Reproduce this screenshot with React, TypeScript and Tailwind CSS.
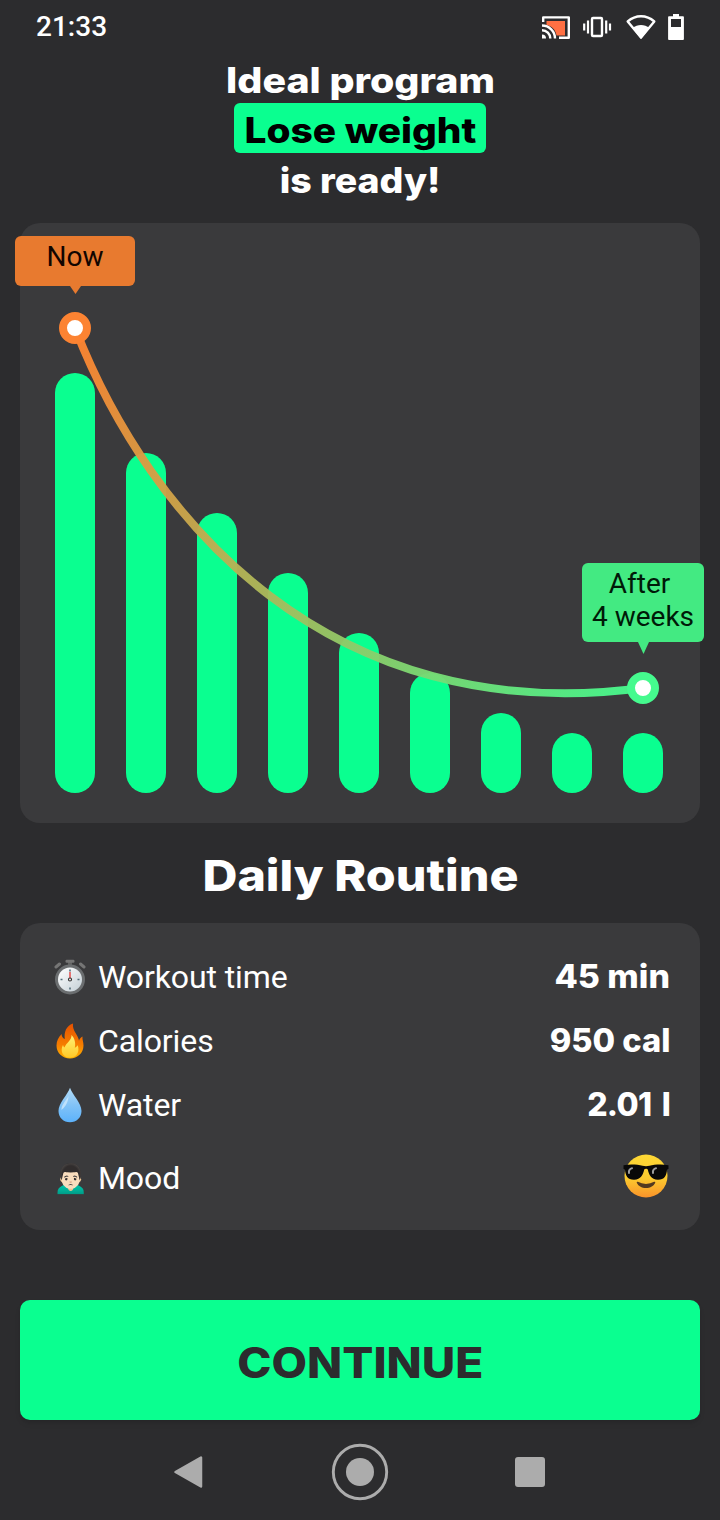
import { type FC, type ReactNode } from 'react';

interface RoutineItem {
    icon: ReactNode;
    label: string;
    value: ReactNode;
    rowClass: string;
    valueClass: string;
}

const BAR_HEIGHTS = [420, 340, 280, 220, 160, 120, 80, 60, 60];

const StopwatchIcon: FC = () => (
    <svg className="ml-0.5" width="32" height="36" viewBox="0 0 32 36">
        <defs>
            <linearGradient id="watch-face" x1="0" y1="0" x2="1" y2="1">
                <stop offset="0" stopColor="#ffffff" />
                <stop offset="1" stopColor="#c4cfd6" />
            </linearGradient>
        </defs>
        <path d="M14 3h4v5h-4z" fill="#616161" />
        <rect x="11.500" y=".8" width="9" height="3" rx="1.200" fill="#757575" />
        <path d="M2 8l3.500-3M30 8l-3.500-3" stroke="#757575" strokeWidth="3" strokeLinecap="round" />
        <circle cx="16" cy="20.500" r="15" fill="#6b6e70" />
        <circle cx="16" cy="20.500" r="12" fill="url(#watch-face)" />
        <path d="M16 10.500v2M16 28.500v2M6.500 20.500h2M23.500 20.500h2" stroke="#546e7a" strokeWidth="1.600" />
        <path d="M16 13v6" stroke="#e57373" strokeWidth="2" />
        <circle cx="16" cy="20.500" r="1.500" fill="#fff" stroke="#333" strokeWidth="1.200" />
    </svg>
);

const FlameIcon: FC = () => (
    <svg className="ml-1" width="28" height="36" viewBox="0 0 28 36">
        <defs>
            <linearGradient id="flame-outer" x1="0" y1="0" x2="0" y2="1">
                <stop offset="0" stopColor="#e65100" />
                <stop offset=".6" stopColor="#f57c00" />
                <stop offset="1" stopColor="#ffb300" />
            </linearGradient>
            <linearGradient id="flame-inner" x1="0" y1="0" x2="0" y2="1">
                <stop offset="0" stopColor="#fff176" />
                <stop offset="1" stopColor="#ffca28" />
            </linearGradient>
        </defs>
        <path d="M17 .5C10 3 8 9 8.800 16c-2-.8-3.300-2.800-3.200-5C2.500 14 .5 18 .5 22.500.5 30 6.500 35.500 14 35.500S27.500 30 27.500 22.500c0-3.500-1.400-6-1-9-1.600.8-3 2.200-3.500 4.300C22.500 12 16 8 17 .5z" fill="url(#flame-outer)" />
        <path d="M15.500 12c.5 5-5.500 8-7 12.500-.8-.6-1.300-1.600-1.500-2.600-3.500 6 .2 12.800 7 12.800 7.300 0 10-7 7.600-12.400-.7 1.300-1.500 2-2.800 2.600C20 20 18.500 15 15.500 12z" fill="url(#flame-inner)" />
    </svg>
);

const DropIcon: FC = () => (
    <svg className="ml-1.5" width="24" height="36" viewBox="0 0 24 36">
        <defs>
            <linearGradient id="drop" x1="0" y1="0" x2="0" y2="1">
                <stop offset="0" stopColor="#b3dcf8" />
                <stop offset=".5" stopColor="#82c3f7" />
                <stop offset="1" stopColor="#5cb2fb" />
            </linearGradient>
        </defs>
        <path d="M12 .8C9.500 8 .5 16 .5 24c0 6.500 5 11.300 11.500 11.300S23.500 30.500 23.500 24C23.500 16 14.500 8 12 .8z" fill="url(#drop)" />
        <path d="M10.500 9C8 14 3 18 3.500 23c2.500-2 7-7 7-14z" fill="#d5edfc" opacity=".7" />
    </svg>
);

const CoolFaceIcon: FC = () => (
    <svg className="mb-1" width="48" height="44" viewBox="0 0 48 44">
        <defs>
            <linearGradient id="cool-face" x1="0" y1="0" x2="0" y2="1">
                <stop offset="0" stopColor="#fdd835" />
                <stop offset=".55" stopColor="#fccb2f" />
                <stop offset="1" stopColor="#f9922a" />
            </linearGradient>
        </defs>
        <circle cx="24" cy="22" r="21.500" fill="url(#cool-face)" />
        <path d="M1.500 11.200c6-1.200 14-.9 19 .6 2 .6 5 .6 7 0 5-1.500 13-1.800 19-.6v3.600l-1.500 1c-.5 6-2.500 10-9 10-7 0-9-5-10.200-10.200-.6-1.300-3-1.300-3.600 0C21 20.800 19 25.800 12 25.800c-6.500 0-8.500-4-9-10l-1.500-1z" fill="#080808" />
        <path d="M7 19c-.5-2.500 1-4.500 3-4.800M31 19c-.5-2.500 1-4.500 3-4.800" stroke="#9e9e9e" strokeWidth="2" fill="none" strokeLinecap="round" />
        <path d="M15 28.500c5.500 3.300 12.500 3.300 18 0-1.500 7.300-16.500 7.300-18 0z" fill="#543a20" />
        <path d="M15.500 28.500c5 3 12 3 17 0" stroke="#543a20" strokeWidth="1.600" fill="none" strokeLinecap="round" />
    </svg>
);

const ROUTINE: RoutineItem[] = [
    { icon: <StopwatchIcon />, label: 'Workout time', value: '45 min', rowClass: 'h-16', valueClass: 'scale-x-[1.06]' },
    { icon: <FlameIcon />, label: 'Calories', value: '950 cal', rowClass: 'h-16', valueClass: 'scale-x-[1.02]' },
    { icon: <DropIcon />, label: 'Water', value: '2.01 l', rowClass: 'h-16', valueClass: 'tracking-[-0.7px] [word-spacing:4px]' },
    { icon: '🙍🏻‍♂️', label: 'Mood', value: <CoolFaceIcon />, rowClass: 'h-[82px]', valueClass: '' },
];

const StatusBar: FC = () => (
    <div className="flex h-[53px] items-center justify-between pr-[35px] pl-9">
        <span className="text-[28px] leading-none font-medium">21:33</span>
        <svg width="144" height="28" viewBox="541 12 144 28" fill="none">
            {/* Cast */}
            <path d="M546.500 20H565v14.500h-8.500c-1-6-4.500-9.500-10-10.500z" fill="#ff7043" />
            <path d="M543.200 21v-4.600H568.800v20.400H559" stroke="#fff" strokeWidth="2.400" strokeLinejoin="round" />
            <path d="M542 24.500a13 13 0 0 1 13 13M542 29.200a8.300 8.300 0 0 1 8.300 8.300" stroke="#fff" strokeWidth="2.400" />
            <path d="M542 33.500a4 4 0 0 1 4 4h-4z" fill="#fff" />
            {/* Vibrate */}
            <rect x="592" y="17" width="10" height="18" rx="1" stroke="#fff" strokeWidth="2.400" />
            <path d="M588 19.500v13M584.200 22.500v7M606.200 19.500v13M610 22.500v7" stroke="#fff" strokeWidth="2.200" />
            {/* Wifi */}
            <path d="M627.700 20.500c8-7 18.600-7 26.600 0L641 36.500z" stroke="#fff" strokeWidth="2.400" strokeLinejoin="round" />
            <path d="M632.500 27c5-4 12-4 17 0L641 38z" fill="#fff" />
            {/* Battery */}
            <path d="M673 13h6v2.200h4q.9 0 .9.900v22q0 .9-.9.900h-14q-.9 0-.9-.9v-22q0-.9.900-.9h4zM671 18v8h10v-8z" fill="#fff" fillRule="evenodd" />
        </svg>
    </div>
);

const Title: FC = () => (
    <h1 className="flex flex-col items-center font-['Inter',sans-serif] text-[35px] leading-[50px] font-extrabold">
        <span className="flex h-[50px] scale-x-[1.125] items-center pt-1">Ideal program</span>
        <span className="flex h-[50px] w-[252px] items-center justify-center rounded-[6px] bg-[#0aff90] text-black">
            <span className="scale-x-[1.11] pt-1">Lose weight</span>
        </span>
        <span className="flex h-[50px] scale-x-[1.07] items-center pt-1">is ready!</span>
    </h1>
);

const WeightChart: FC = () => (
    <section className="relative mx-5 mt-5 h-[600px] rounded-[20px] bg-[#3a3a3c]">
        <div className="flex h-full items-end gap-[31px] pb-[30px] pl-[35px]">
            {BAR_HEIGHTS.map((height, i) => (
                <div key={i} className="w-10 rounded-full bg-[#0aff90]" style={{ height }} />
            ))}
        </div>

        {/* Trend line */}
        <svg className="absolute inset-0" width="680" height="600" viewBox="20 223 680 600" fill="none">
            <defs>
                <linearGradient id="trend" gradientUnits="userSpaceOnUse" x1="75" y1="328" x2="643" y2="688">
                    <stop offset="0" stopColor="#ff8330" />
                    <stop offset="1" stopColor="#45fa8e" />
                </linearGradient>
            </defs>
            <path d="M75 328C150 521 330 729 643 688" stroke="url(#trend)" strokeWidth="8" opacity=".96" />
            <circle cx="75" cy="328" r="12" fill="#fff" stroke="#fc8332" strokeWidth="8" />
            <circle cx="643" cy="688" r="12" fill="#fff" stroke="#45fa8e" strokeWidth="8" />
        </svg>

        <div className="absolute top-[13px] -left-[5px] h-[50px] w-[120px] rounded-[6px] bg-[#e87a2f] pt-1 text-center text-[28px] leading-[33px] text-[#120500]">
            Now
            <svg className="absolute top-[50px] left-[55px]" width="11" height="8" viewBox="0 0 11 8">
                <path d="M0 0h11L5.500 8z" fill="#e87a2f" />
            </svg>
        </div>
        <div className="absolute top-[340px] left-[562px] h-[79px] w-[122px] rounded-[6px] bg-[#43ea82] pt-1 text-center text-[28px] leading-[33px] text-[#001a08]">
            After&nbsp;
            <br />4 weeks
            <svg className="absolute top-[79px] left-14" width="11" height="12" viewBox="0 0 11 12">
                <path d="M0 0h11L5.500 12z" fill="#43ea82" />
            </svg>
        </div>
    </section>
);

const RoutineRow: FC<{ item: RoutineItem }> = ({ item }) => (
    <div className={`flex items-center ${item.rowClass}`}>
        <span className="w-[46px] text-[30px] leading-none whitespace-nowrap">{item.icon}</span>
        <span className="text-[32px] leading-none tracking-[-0.1px]">{item.label}</span>
        <span className={`ml-auto origin-right font-['Inter',sans-serif] text-[32px] leading-none font-extrabold ${item.valueClass}`}>
            {item.value}
        </span>
    </div>
);

const NavBar: FC = () => (
    <div className="flex h-[100px] items-center justify-center pt-1">
        <svg width="374" height="60" viewBox="173 1442 374 60" fill="#acacac">
            <path d="M175.500 1472 201 1457.500v29z" stroke="#acacac" strokeWidth="2.500" strokeLinejoin="round" />
            <circle cx="360" cy="1472" r="14" />
            <circle cx="360" cy="1472" r="26.700" fill="none" stroke="#acacac" strokeWidth="2.900" />
            <rect x="515" y="1457" width="30" height="30" rx="3" />
        </svg>
    </div>
);

export default function App() {
    return (
        <main className="flex h-[1520px] w-[720px] flex-col overflow-hidden bg-[#2c2c2e] font-['Roboto','Noto_Color_Emoji',sans-serif] text-white">
            <StatusBar />
            <Title />
            <WeightChart />

            <h2 className="flex h-[100px] items-center justify-center pt-1 font-['Inter',sans-serif] text-[43px] leading-none font-extrabold">
                <span className="scale-x-[1.125]">Daily Routine</span>
            </h2>

            <section className="mx-5 h-[307px] rounded-[20px] bg-[#3a3a3c] pt-[22px] pr-[30px] pl-8">
                {ROUTINE.map((item) => (
                    <RoutineRow key={item.label} item={item} />
                ))}
            </section>

            <button
                type="button"
                className="mx-5 mt-[70px] flex h-[120px] items-center justify-center rounded-[10px] bg-[#0aff90] pt-1.5 font-['Inter',sans-serif] text-[42px] leading-none font-extrabold text-[#2c2c2e] shadow-md"
            >
                <span className="scale-x-[1.095]">CONTINUE</span>
            </button>
            <NavBar />
        </main>
    );
}
